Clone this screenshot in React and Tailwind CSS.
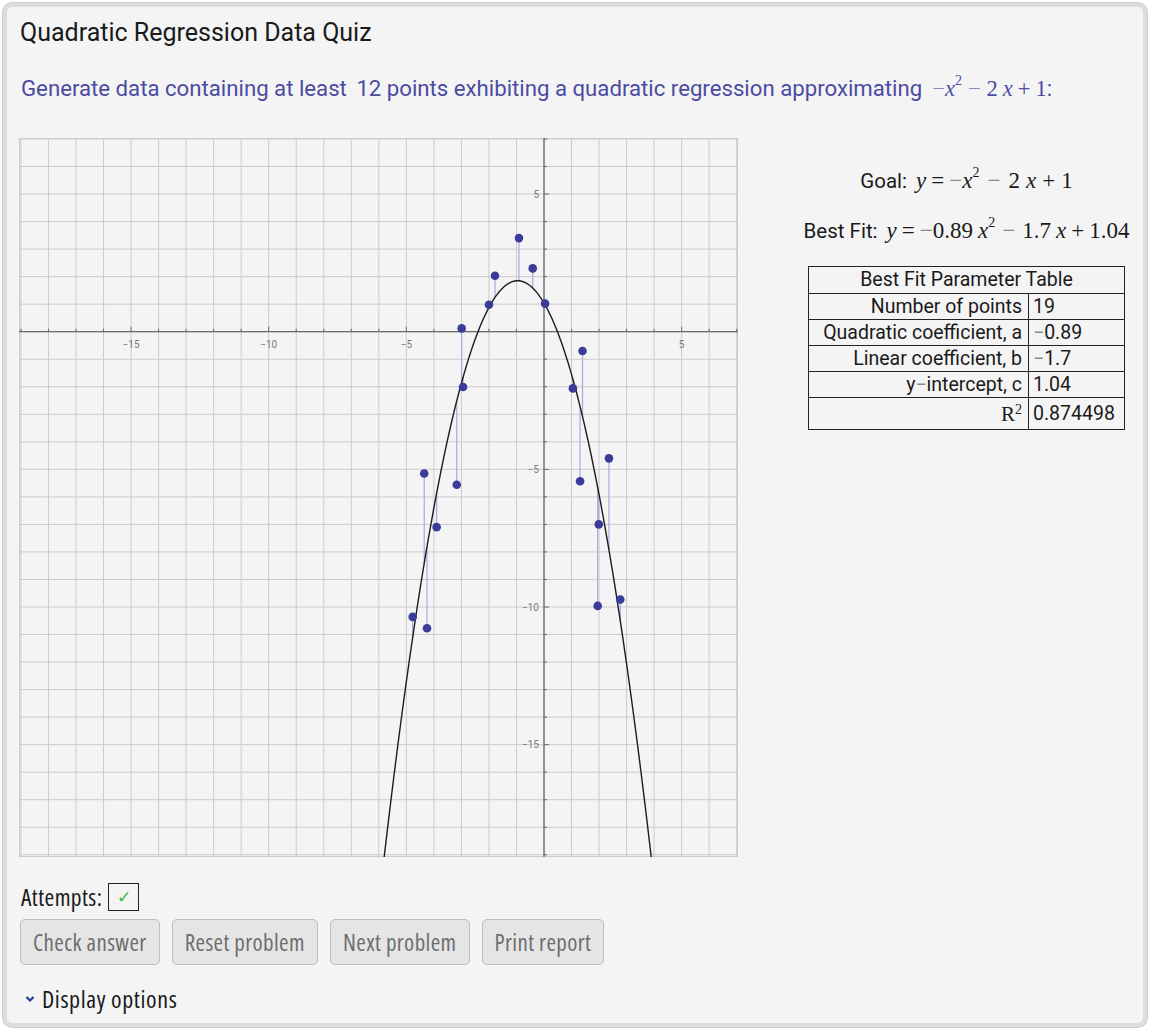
import React from 'react'

const S = 27.53
const OX = 525
const OY = 193.7
const SIZE = 719
const X = (x) => OX + x * S
const Y = (y) => OY - y * S
const fit = (x) => -0.89 * x * x - 1.7 * x + 1.04

const points = [
  [-2.99, 0.12], [-2.0, 0.98], [-1.78, 2.03], [-0.91, 3.4], [-0.41, 2.3],
  [0.04, 1.02], [1.4, -0.7], [-2.94, -2.01], [1.05, -2.06], [-4.35, -5.15],
  [-3.17, -5.56], [-3.9, -7.1], [1.31, -5.43], [2.36, -4.6], [1.99, -7.0],
  [1.95, -9.96], [2.77, -9.73], [-4.77, -10.36], [-4.25, -10.77],
]

const ticks = []
for (let i = -19; i <= 7; i++) ticks.push(i)

const curve = () => {
  const pts = []
  for (let x = -7; x <= 5.5; x += 0.05) pts.push(`${X(x).toFixed(2)},${Y(fit(x)).toFixed(2)}`)
  return pts.join(' ')
}

const Minus = ({ className = '' }) => <span className={`text-[#8a8a8a] ${className}`}>−</span>

const Sq = () => <sup className="relative -top-[0.8em] text-[14px]">2</sup>

const Graph = () => (
  <svg width={SIZE} height={SIZE} className="shrink-0 -ml-px">
    <defs>
      <clipPath id="plot">
        <rect x="0" y="0" width={SIZE} height={SIZE} />
      </clipPath>
    </defs>
    {ticks.map((i) => (
      <g key={i}>
        <line x1={X(i)} y1="0" x2={X(i)} y2={SIZE} stroke="#cbcbcb" strokeWidth="1" />
        <line x1="0" y1={Y(i)} x2={SIZE} y2={Y(i)} stroke="#cbcbcb" strokeWidth="1" />
      </g>
    ))}
    <rect x="0.5" y="0.5" width={SIZE - 1} height={SIZE - 1} fill="none" stroke="#cbcbcb" />
    <line x1="0" y1={Y(0)} x2={SIZE} y2={Y(0)} stroke="#6a6a6a" strokeWidth="1.3" />
    <line x1={X(0)} y1="0" x2={X(0)} y2={SIZE} stroke="#6a6a6a" strokeWidth="1.3" />
    {ticks.filter((i) => i !== 0).map((i) => (
      <g key={`t${i}`}>
        <line x1={X(i)} y1={Y(0)} x2={X(i)} y2={Y(0) - (i % 5 === 0 ? 5 : 3)} stroke="#6a6a6a" />
        <line x1={X(0)} y1={Y(i)} x2={X(0) + (i % 5 === 0 ? 5 : 3)} y2={Y(i)} stroke="#6a6a6a" />
      </g>
    ))}
    {[-15, -10, -5, 5].map((v) => (
      <text key={`x${v}`} x={X(v)} y={Y(0) + 16} fontSize="10" fill="#7a7a7a" textAnchor="middle" fontFamily="Roboto, sans-serif">
        {v < 0 ? `−${-v}` : v}
      </text>
    ))}
    {[5, -5, -10, -15].map((v) => (
      <text key={`y${v}`} x={X(0) - 5} y={Y(v) + 3.5} fontSize="10" fill="#7a7a7a" textAnchor="end" fontFamily="Roboto, sans-serif">
        {v < 0 ? `−${-v}` : v}
      </text>
    ))}
    <g clipPath="url(#plot)">
      {points.map(([x, y], i) => (
        <line key={`r${i}`} x1={X(x)} y1={Y(y)} x2={X(x)} y2={Y(fit(x))} stroke="#a9a9dc" strokeWidth="1.2" />
      ))}
      <polyline points={curve()} fill="none" stroke="#1c1c1c" strokeWidth="1.4" />
      {points.map(([x, y], i) => (
        <circle key={`p${i}`} cx={X(x)} cy={Y(y)} r="4.3" fill="#3b3b9a" />
      ))}
    </g>
  </svg>
)

const rows = [
  ['Number of points', '19'],
  ['Quadratic coefficient, a', <><Minus />0.89</>],
  ['Linear coefficient, b', <><Minus />1.7</>],
  [<>y<Minus />intercept, c</>, '1.04'],
]

const buttons = ['Check answer', 'Reset problem', 'Next problem', 'Print report']

export default function App() {
  return (
    <div className="min-h-screen bg-white p-[3px] font-['Roboto',sans-serif] text-[#1a1a1a]">
      <div className="h-[1024px] rounded-[9px] border-[4px] border-[#dddddd] bg-[#f4f4f4] px-[13px] pt-[11px] shadow-[0_0_0_1px_#cfcfcf]">
        <h1 className="text-[25px] leading-[30px]">Quadratic Regression Data Quiz</h1>

        <p className="mt-[27px] pl-px text-[22.2px] leading-[26px] text-[#4b4ba3] whitespace-nowrap">
          Generate data containing at least <span className="ml-[4px]">12</span> points exhibiting a quadratic regression approximating
          <span className="ml-[10px] font-['Liberation_Serif',serif] text-[22.5px]">
            <span className="text-[#8a8ac0]">−</span><span className="italic">x</span><Sq />
            <span className="mx-[6px] text-[#8a8ac0]">−</span>2<span className="ml-[5px] italic">x</span>
            <span className="mx-[5px]">+</span>1
          </span>
          :
        </p>

        <div className="mt-[36px] flex">
          <Graph />
          <div className="ml-[65px] flex flex-1 flex-col items-center">
            <div className="mt-[26px] flex h-[30px] items-baseline whitespace-nowrap">
              <span className="text-[20.5px]">Goal:</span>
              <span className="ml-[9px] font-['Liberation_Serif',serif] text-[23px]">
                <span className="italic">y</span><span className="mx-[5px]">=</span><Minus /><span className="italic">x</span><Sq />
                <Minus className="mx-[8px]" />2<span className="ml-[6px] italic">x</span><span className="mx-[6px]">+</span>1
              </span>
            </div>
            <div className="mt-[20px] flex h-[30px] items-baseline whitespace-nowrap">
              <span className="text-[20.5px]">Best Fit:</span>
              <span className="ml-[9px] font-['Liberation_Serif',serif] text-[23px]">
                <span className="italic">y</span><span className="mx-[5px]">=</span><Minus />0.89<span className="ml-[5px] italic">x</span><Sq />
                <Minus className="mx-[7px]" />1.7<span className="ml-[5px] italic">x</span><span className="mx-[5px]">+</span>1.04
              </span>
            </div>
            <table className="mt-[22px] border-collapse border border-[#222] text-[19.5px] leading-[22px]">
              <tbody>
                <tr className="h-[27px]">
                  <td colSpan={2} className="border border-[#222] text-center">Best Fit Parameter Table</td>
                </tr>
                {rows.map(([k, v], i) => (
                  <tr key={i} className="h-[26px]">
                    <td className="w-[220px] whitespace-nowrap border border-[#222] pr-[6px] text-right">{k}</td>
                    <td className="w-[96px] border border-[#222] pl-[4px]">{v}</td>
                  </tr>
                ))}
                <tr className="h-[32px]">
                  <td className="border border-[#222] pr-[6px] text-right font-['Liberation_Serif',serif] text-[21px]">
                    R<sup className="relative -top-[0.5em] text-[14px]">2</sup>
                  </td>
                  <td className="border border-[#222] pl-[4px]">0.874498</td>
                </tr>
              </tbody>
            </table>
          </div>
        </div>

        <div className="mt-[26px] flex h-[28px] items-center pl-px font-['Open_Sans',sans-serif] [font-stretch:87.5%]">
          <span className="text-[23.5px] leading-[28px] tracking-[0.4px]">Attempts:</span>
          <span className="ml-[6px] flex h-[28px] w-[31px] items-center justify-center border border-[#222] text-[17px] text-[#33bb33]">✓</span>
        </div>

        <div className="mt-[8px] flex gap-[12px]">
          {buttons.map((b) => (
            <button key={b} className="h-[46px] rounded-[5px] border border-[#bdbdbd] bg-[#e5e5e5] px-[12px] font-['Open_Sans',sans-serif] text-[23px] leading-[26px] tracking-[0.4px] text-[#6e6e6e] [font-stretch:87.5%]">
              {b}
            </button>
          ))}
        </div>

        <div className="mt-[22px] flex h-[24px] items-center pl-[5px]">
          <svg width="10" height="8" viewBox="0 0 10 8" className="mr-[7px]">
            <path d="M1.5 2 L5 5.5 L8.5 2" fill="none" stroke="#1f3b8f" strokeWidth="2.2" />
          </svg>
          <span className="font-['Open_Sans',sans-serif] text-[24px] leading-[28px] tracking-[0.6px] [font-stretch:87.5%]">Display options</span>
        </div>
      </div>
    </div>
  )
}
